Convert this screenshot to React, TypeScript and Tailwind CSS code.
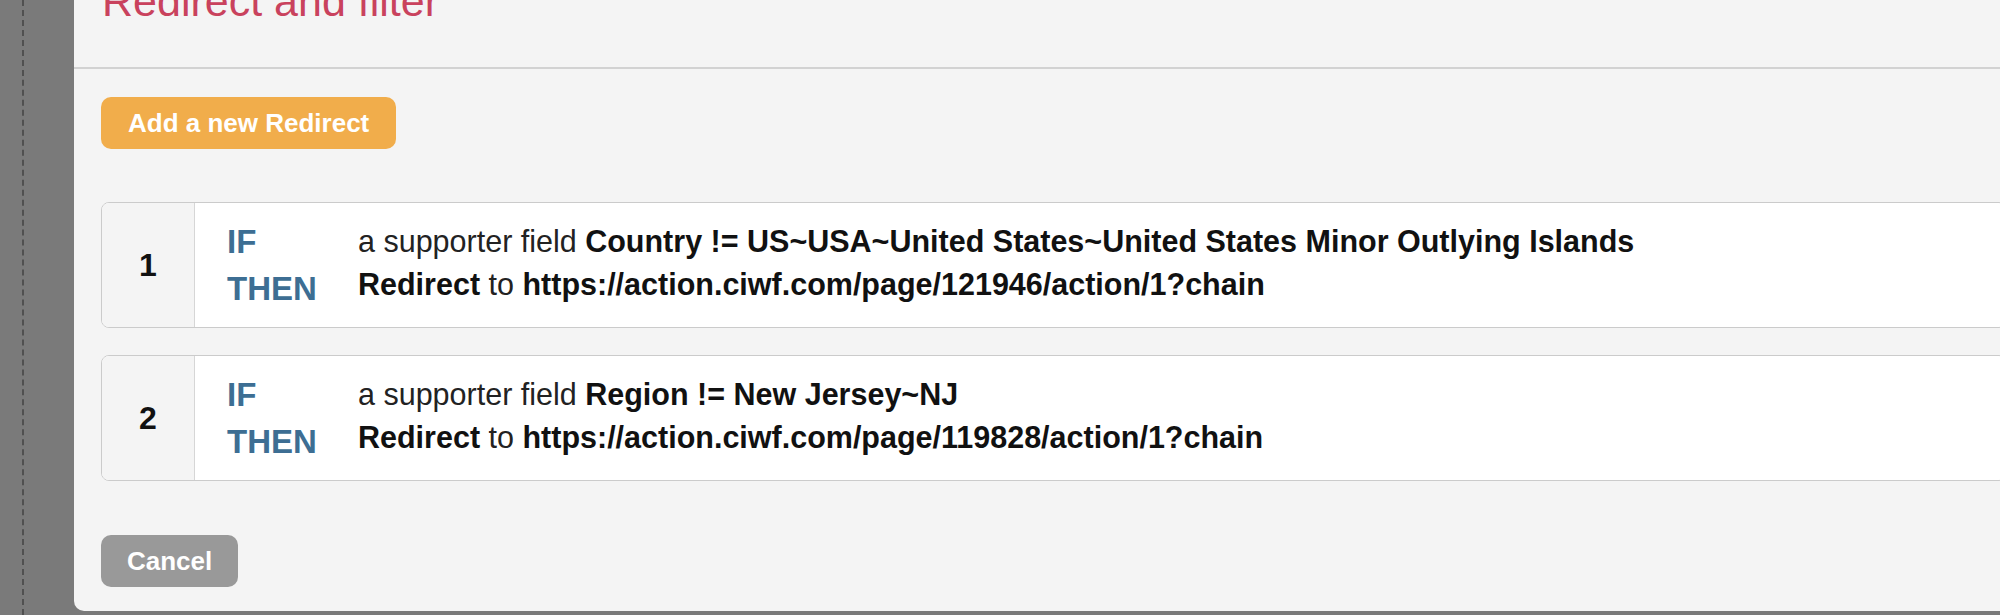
const rules = [
  {
    n: 1,
    field: 'Country',
    value: 'US~USA~United States~United States Minor Outlying Islands',
    url: 'https://action.ciwf.com/page/121946/action/1?chain',
  },
  {
    n: 2,
    field: 'Region',
    value: 'New Jersey~NJ',
    url: 'https://action.ciwf.com/page/119828/action/1?chain',
  },
];

function RuleCard({ n, field, value, url }: (typeof rules)[number]) {
  return (
    <div className="flex h-[126px] overflow-hidden rounded-[8px] border border-[#cbcbcb] bg-white">
      <div className="flex w-[93px] shrink-0 items-center justify-center border-r border-[#d6d6d6] bg-[#f4f4f4] text-[32px] font-bold text-[#111]">
        {n}
      </div>
      <div className="flex items-center pl-[32px]">
        <div className="w-[131px] text-[33px] font-bold leading-[47px] text-[#3d6e93]">
          <div>IF</div>
          <div>THEN</div>
        </div>
        <div className="-mt-[4px] text-[30.5px] leading-[43px] text-[#222]">
          <div className="whitespace-nowrap">
            a supporter field{' '}
            <span className="font-bold text-[#111]">
              {field} != {value}
            </span>
          </div>
          <div className="whitespace-nowrap">
            <span className="font-bold text-[#111]">Redirect</span> to{' '}
            <span className="font-bold text-[#111]">{url}</span>
          </div>
        </div>
      </div>
    </div>
  );
}

export default function App() {
  return (
    <div className="flex h-[615px] w-[2000px] overflow-hidden bg-[#7a7a7a] font-['Liberation_Sans',Arial,sans-serif]">
      <div className="w-[74px] shrink-0">
        <div className="ml-[22px] h-full w-0 border-l-2 border-dashed border-[#505050]" />
      </div>
      <div className="h-[611px] w-[1960px] shrink-0 rounded-bl-[10px] bg-[#f4f4f4]">
        <div className="flex h-[69px] flex-col border-b-2 border-[#d2d2d2] pl-[28px]">
          <h3 className="-mt-[20px] text-[43px] leading-[43px] text-[#c9425d]">Redirect and filter</h3>
        </div>
        <div className="px-[27px] pt-[28px]">
          <button className="h-[52px] rounded-[10px] bg-[#f1ad4b] px-[27px] text-[26px] font-bold text-white">
            Add a new Redirect
          </button>
          <div className="mt-[53px] flex flex-col gap-[27px]">
            {rules.map((r) => (
              <RuleCard key={r.n} {...r} />
            ))}
          </div>
          <button className="mt-[54px] h-[52px] rounded-[10px] bg-[#999999] px-[26px] text-[26px] font-bold text-white">
            Cancel
          </button>
        </div>
      </div>
    </div>
  );
}
